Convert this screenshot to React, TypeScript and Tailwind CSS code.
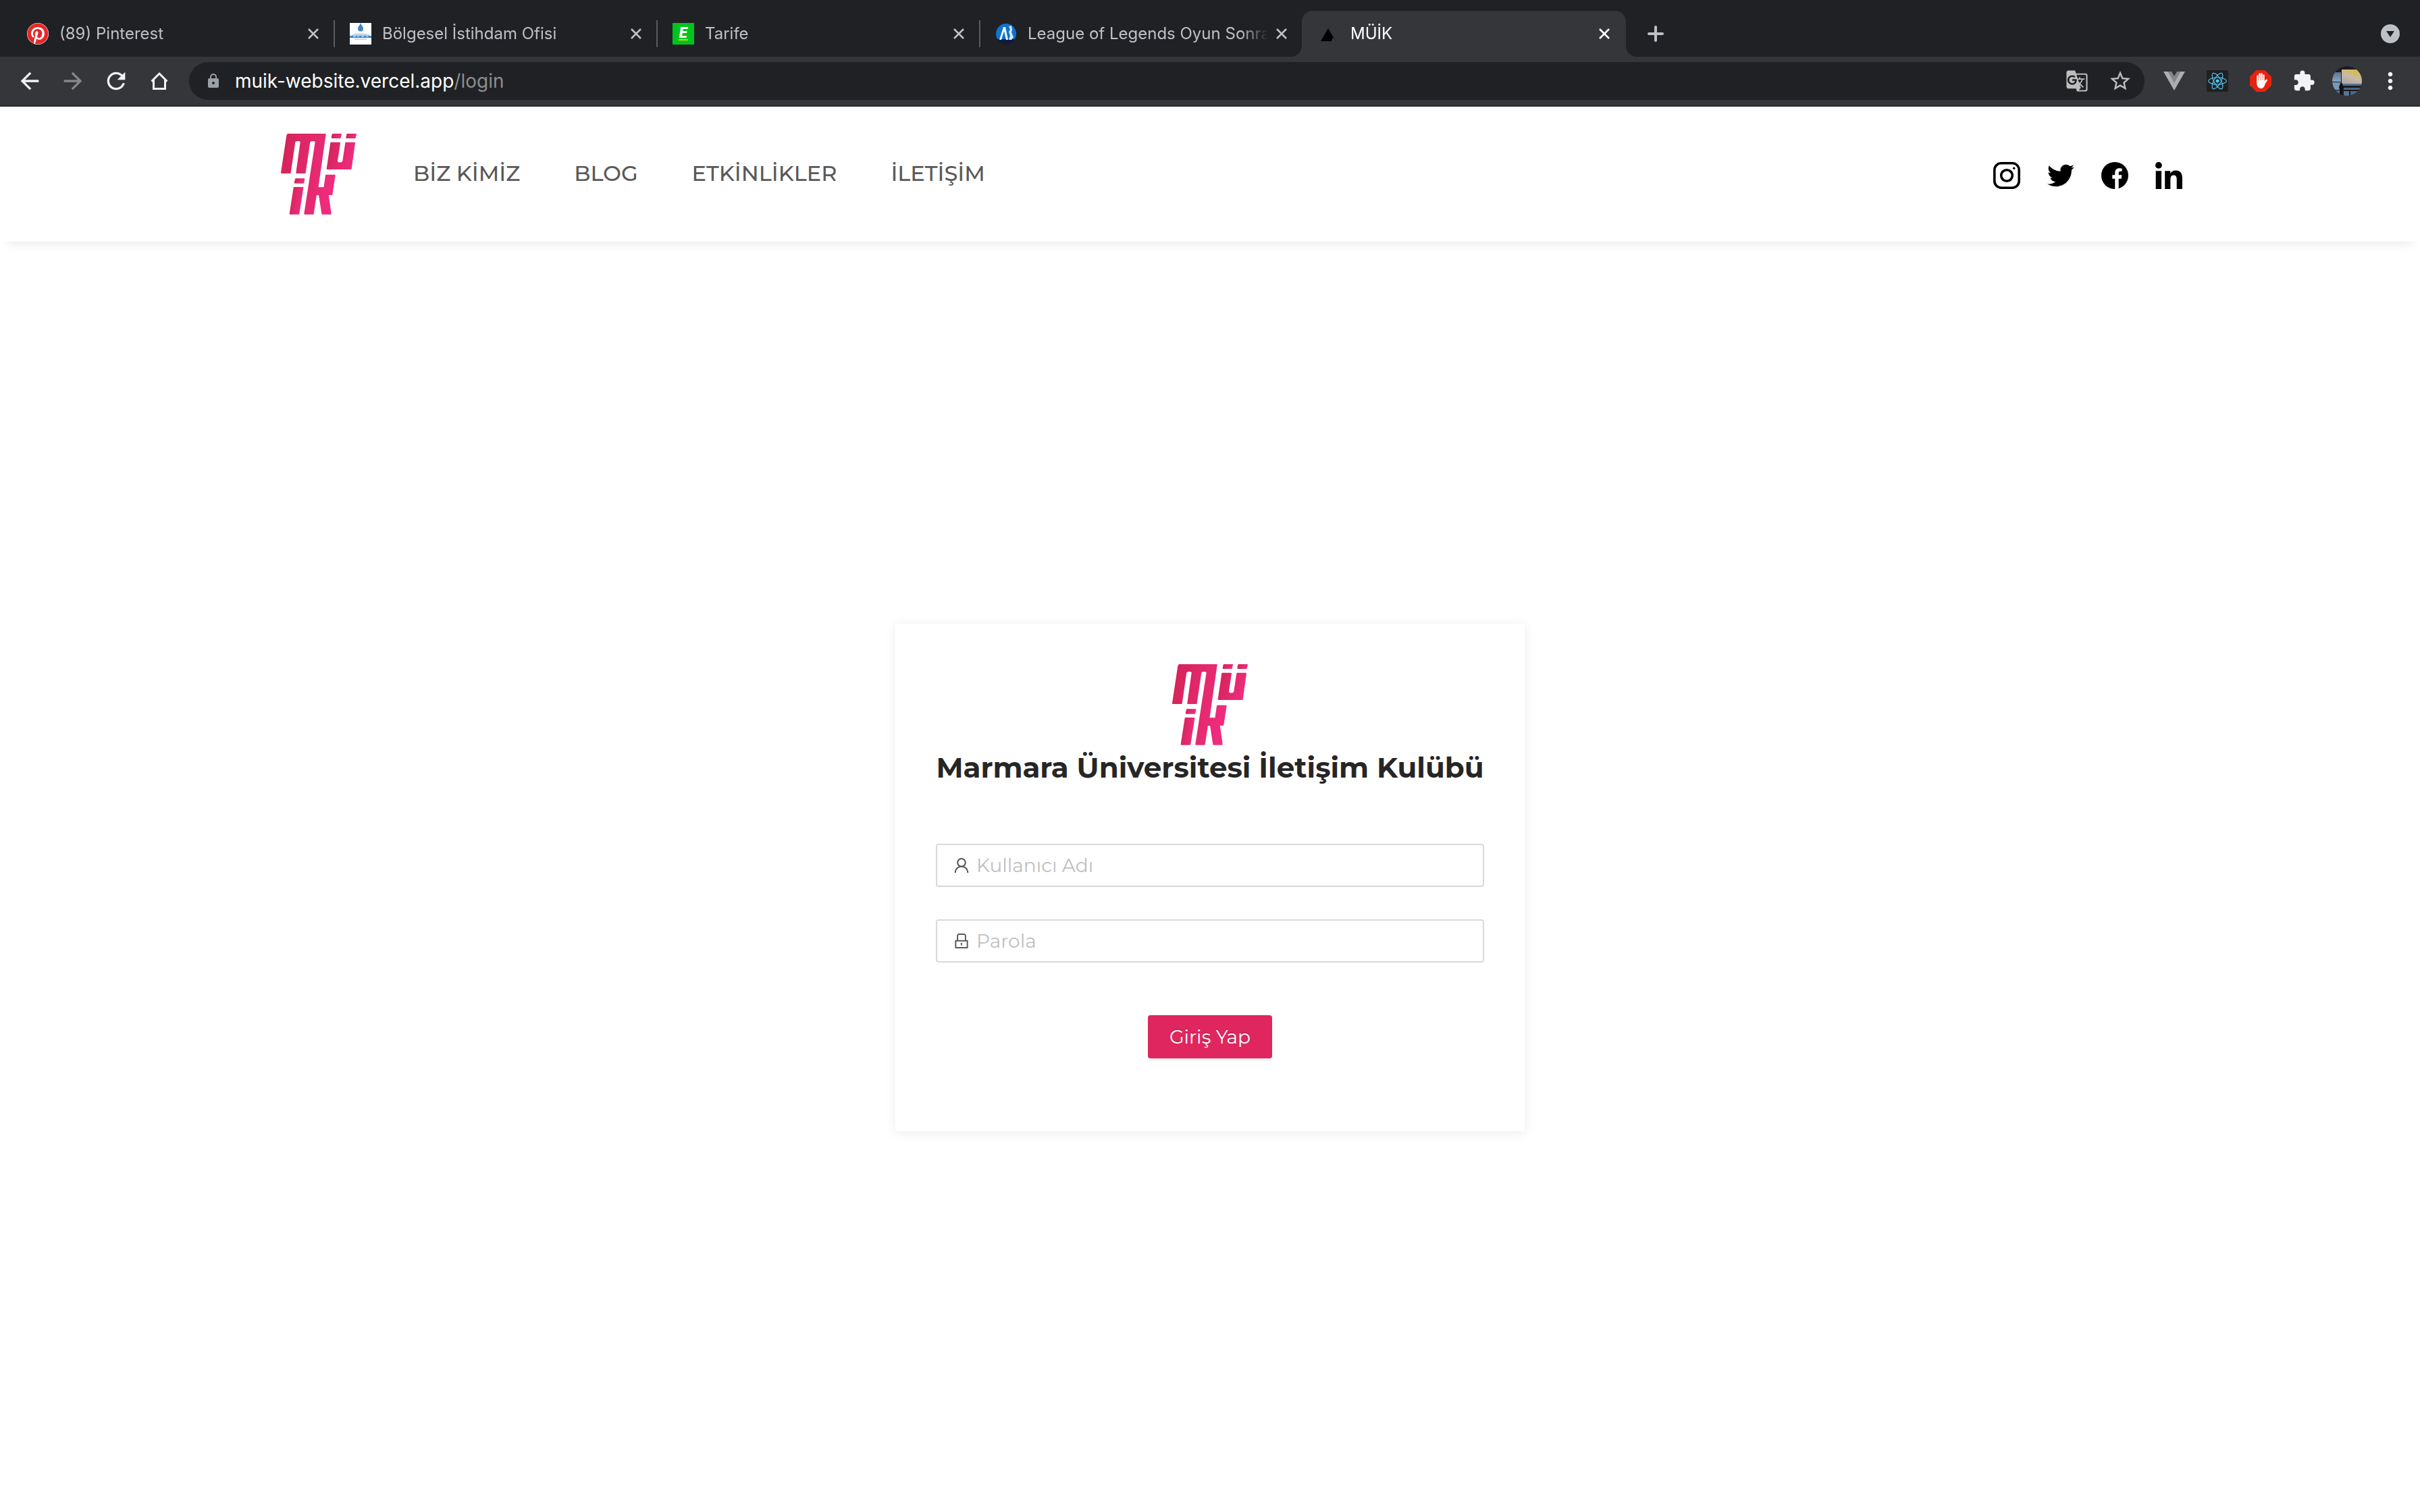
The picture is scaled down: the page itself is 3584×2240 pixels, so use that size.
import type { ReactNode } from "react";
import { AiOutlineLock, AiOutlineUser } from "react-icons/ai";
import { FaHandPaper, FaPinterest, FaReact, FaTwitter } from "react-icons/fa";
import {
  MdArrowBack,
  MdArrowForward,
  MdExtension,
  MdGTranslate,
  MdLock,
  MdMoreVert,
  MdRefresh,
  MdStarBorder,
} from "react-icons/md";

/* ---------- Favicons ---------- */

function PinterestIcon() {
  return (
    <span className="flex size-8 items-center justify-center rounded-full bg-white">
      <FaPinterest className="size-8 text-[#e62829]" />
    </span>
  );
}

function OfficeIcon() {
  return (
    <svg viewBox="0 0 32 32" className="size-8">
      <rect width="32" height="32" fill="#fff" />
      <path d="M16 0c1 4 4 5 4 8.500a4 4 0 0 1-8 0C12 5 15 4 16 0z" fill="#3f84bf" />
      <path d="M7 15h18v2H7z" fill="#d3e3f1" />
      <path d="M3 17h26v2H3z" fill="#b3cfe8" />
      <path d="M0 19h32v3H0z" fill="#3f86c6" />
      <path d="M5 19h4v2H5zM11 19h3v2h-3zM17 19h4v2h-4zM24 19h3v2h-3z" fill="#9fc2e2" />
      <path d="M7 23h18v2H7z" fill="#c5daee" />
    </svg>
  );
}

function TarifeIcon() {
  return (
    <svg viewBox="0 0 32 32" className="size-8">
      <rect width="32" height="32" fill="#00c31f" />
      <text
        x="16"
        y="22"
        textAnchor="middle"
        fill="#fff"
        className="font-[Inter,sans-serif] text-[21px] font-extrabold italic"
      >
        E
      </text>
      <rect x="9" y="24" width="14" height="2" fill="#d8d800" />
    </svg>
  );
}

function LeagueIcon() {
  return (
    <svg viewBox="0 0 32 32" className="size-8">
      <circle cx="16" cy="16" r="15" fill="#0d74cf" />
      <path d="M3 24h26a15 15 0 0 1-26 0z" fill="#141838" />
      <path d="M6 25l6-19h3l4 19h-3L13 12 9 25z" fill="#f4f7fb" />
      <path d="M20 5l4-1 1 6-1 4 3 7-3 4h-4l2-6-2-6 2-3z" fill="#dbe6f3" />
    </svg>
  );
}

function VercelIcon() {
  return (
    <svg viewBox="0 0 32 32" className="size-8">
      <path d="M15 8l11 19H4z" fill="#000" />
      <path d="M22 21l4 6h-6z" fill="#3a3b3e" />
    </svg>
  );
}

/* ---------- Browser chrome ---------- */

type TabData = { title: string; icon: ReactNode; active?: boolean; divider?: boolean };

const tabs: TabData[] = [
  { title: "(89) Pinterest", icon: <PinterestIcon /> },
  { title: "Bölgesel İstihdam Ofisi", icon: <OfficeIcon />, divider: true },
  { title: "Tarife", icon: <TarifeIcon />, divider: true },
  { title: "League of Legends Oyun Sonra", icon: <LeagueIcon />, divider: true },
  { title: "MÜİK", icon: <VercelIcon />, active: true },
];

function CloseGlyph() {
  return (
    <svg viewBox="0 0 16 16" className="size-4" fill="none" stroke="currentColor" strokeWidth="2.6">
      <path d="M1 1l14 14M15 1L1 15" />
    </svg>
  );
}

function Tab({ title, icon, active, divider }: TabData) {
  return (
    <div
      className={
        active
          ? "flex h-17 w-[480px] min-w-0 items-center rounded-t-2xl bg-[#35363a] pr-6 text-white"
          : "flex h-17 w-[478px] min-w-0 items-center pr-[22px] text-[#bdc1c6]"
      }
    >
      <span className={divider ? "h-10 w-0.5 bg-[#5a5b5f]" : "h-10 w-0.5"} />
      <button type="button" className="flex min-w-0 flex-1 items-center gap-4 pl-[22px] text-left">
        <span className="shrink-0">{icon}</span>
        <span className="flex-1 overflow-hidden text-2xl whitespace-nowrap [mask-image:linear-gradient(to_right,black_calc(100%-40px),transparent)]">
          {title}
        </span>
      </button>
      <button type="button" aria-label={`${title} sekmesini kapat`} className="ml-3">
        <CloseGlyph />
      </button>
    </div>
  );
}

function TabStrip() {
  return (
    <div className="flex h-21 items-end bg-[#202124] pr-[30px] pl-4">
      {tabs.map((t) =>
        t.active ? (
          <div key={t.title} className="-mx-4 flex items-end">
            <svg viewBox="0 0 16 16" className="size-4" fill="#35363a">
              <path d="M16 0v16H0A16 16 0 0 0 16 0z" />
            </svg>
            <Tab {...t} />
            <svg viewBox="0 0 16 16" className="size-4" fill="#35363a">
              <path d="M0 0v16h16A16 16 0 0 1 0 0z" />
            </svg>
          </div>
        ) : (
          <Tab key={t.title} {...t} />
        ),
      )}
      <button type="button" aria-label="Yeni sekme" className="ml-8 flex h-17 items-center text-[#bdc1c6]">
        <svg viewBox="0 0 24 24" className="size-6" fill="none" stroke="currentColor" strokeWidth="4" strokeLinecap="round">
          <path d="M12 2v20M2 12h20" />
        </svg>
      </button>
      <button type="button" aria-label="Sekmelerde ara" className="ml-auto flex h-17 items-center">
        <svg viewBox="0 0 28 28" className="size-7">
          <circle cx="14" cy="14" r="14" fill="#bdc1c6" />
          <path d="M8 10h12l-6 9z" fill="#202124" />
        </svg>
      </button>
    </div>
  );
}

function ToolButton({ label, children }: { label: string; children: ReactNode }) {
  return (
    <button type="button" aria-label={label} className="flex h-14 w-16 shrink-0 items-center justify-center">
      {children}
    </button>
  );
}

function Toolbar() {
  return (
    <div className="flex items-center border-b-2 border-[#28292c] bg-[#35363a] px-3 py-2 text-[#f1f3f4]">
      <ToolButton label="Geri">
        <MdArrowBack className="size-10" />
      </ToolButton>
      <ToolButton label="İleri">
        <MdArrowForward className="size-10 text-[#86878a]" />
      </ToolButton>
      <ToolButton label="Yenile">
        <MdRefresh className="size-10" />
      </ToolButton>
      <ToolButton label="Ana sayfa">
        <svg viewBox="0 0 28 28" className="size-7" fill="none" stroke="currentColor" strokeWidth="3">
          <path d="M2.500 14.500L14 3l11.500 11.500M5.500 12v13.500h17V12" />
        </svg>
      </ToolButton>
      <div className="mx-3 flex h-14 flex-1 items-center rounded-full bg-[#202124] pr-1 pl-6">
        <MdLock className="size-6 text-[#9aa0a6]" />
        <div className="ml-5 flex flex-1 items-center text-[28px] leading-9">
          <input
            aria-label="Adres çubuğu"
            defaultValue="muik-website.vercel.app"
            className="field-sizing-content bg-transparent text-white outline-none"
          />
          <span className="text-[#8c8d90]">/login</span>
        </div>
        <ToolButton label="Bu sayfayı çevir">
          <MdGTranslate className="size-[34px] text-[#bdbdbd]" />
        </ToolButton>
        <ToolButton label="Yer işareti ekle">
          <MdStarBorder className="size-9 text-[#bdbdbd]" />
        </ToolButton>
      </div>
      <ToolButton label="Vue.js devtools">
        <svg viewBox="0 0 32 32" className="size-8">
          <path d="M0 2h32L16 30z" fill="#aeaeae" />
          <path d="M6.500 2h19L16 19z" fill="#85868a" />
          <path d="M12 2h8l-4 7z" fill="#35363a" />
        </svg>
      </ToolButton>
      <ToolButton label="React Developer Tools">
        <span className="flex size-8 items-center justify-center rounded-xs bg-[#202020]">
          <FaReact className="size-7 text-[#55c5ee]" />
        </span>
      </ToolButton>
      <ToolButton label="AdBlock">
        <span className="flex size-8 items-center justify-center bg-[#e6230f] [clip-path:polygon(30%_0,70%_0,100%_30%,100%_70%,70%_100%,30%_100%,0_70%,0_30%)]">
          <svg viewBox="0 0 32 32" className="size-8" fill="none" stroke="#fff" strokeLinecap="round">
            <path d="M11.500 17V8.500M14.500 15V5.500M17.500 15V5.500M20.500 17V7.500" strokeWidth="2.400" />
            <path d="M21 20l3.500-5" strokeWidth="2.800" />
            <path d="M10.300 15h11.400v4.500l1 1C21 25 19.500 27 16.500 27s-6.200-2.500-6.200-7z" fill="#fff" stroke="none" />
          </svg>
        </span>
      </ToolButton>
      <ToolButton label="Uzantılar">
        <MdExtension className="size-[34px]" />
      </ToolButton>
      <ToolButton label="Profil">
        <svg viewBox="0 0 44 44" className="size-11">
          <defs>
            <clipPath id="avatar">
              <circle cx="22" cy="22" r="22" />
            </clipPath>
            <linearGradient id="sunset" x1="0.2" y1="1" x2="0.7" y2="0">
              <stop offset="0" stopColor="#a9a6ac" />
              <stop offset="0.5" stopColor="#c9b9a4" />
              <stop offset="1" stopColor="#d9bb45" />
            </linearGradient>
            <linearGradient id="glass" x1="0" y1="0" x2="0" y2="1">
              <stop offset="0" stopColor="#5d7389" />
              <stop offset="1" stopColor="#86a6c2" />
            </linearGradient>
          </defs>
          <g clipPath="url(#avatar)">
            <rect width="44" height="44" fill="#1b1d22" />
            <rect x="0" y="9" width="13" height="14" fill="url(#glass)" />
            <rect x="0" y="24" width="13" height="11" fill="#7898b5" />
            <rect x="1" y="36" width="10" height="8" fill="#54708a" />
            <rect x="14" y="5" width="30" height="22" fill="url(#sunset)" />
            <rect x="16" y="26" width="28" height="3" fill="#56718a" />
            <rect x="17" y="32" width="27" height="3" fill="#4b657d" />
            <rect x="17" y="37" width="8" height="7" fill="#58748e" />
            <rect x="27" y="37" width="14" height="7" fill="#4d667d" />
            <path d="M12 25h3v3l2 4-2 3v9h-4v-9l-1-4z" fill="#101216" />
          </g>
        </svg>
      </ToolButton>
      <ToolButton label="Menü">
        <MdMoreVert className="size-10" />
      </ToolButton>
    </div>
  );
}

/* ---------- Site ---------- */

const logoShapes = [
  "M79 57H245L211 295H241L249 239H287L274 324H257L269 410H232L219 325H204L191 410H154L203 92C204 81 177 81 175 92L155 228H118L137 92C138 81 111 81 109 92L89 228H51L76 62Z",
  "M278 57H315L311 72H275Z",
  "M343 57H381L377 72H340Z",
  "M271 95H309L297 175C296 188 323 188 325 175L337 95H375L359 210H254Z",
  "M114 256H151L148 272H110Z",
  "M107 294H145L127 410H89Z",
];

function Logo() {
  return (
    <svg viewBox="48 54 336 360" className="h-30 w-28" role="img" aria-label="MÜİK">
      <defs>
        <linearGradient id="brand" x1="0" y1="0.2" x2="1" y2="0.5">
          <stop offset="0" stopColor="#d42459" />
          <stop offset="1" stopColor="#f02c7e" />
        </linearGradient>
      </defs>
      {logoShapes.map((d) => (
        <path key={d} d={d} fill="url(#brand)" stroke="url(#brand)" strokeWidth="6" strokeLinejoin="round" />
      ))}
    </svg>
  );
}

function InstagramIcon() {
  return (
    <svg viewBox="0 0 40 40" className="size-10" fill="none" stroke="currentColor" strokeWidth="3.600">
      <rect x="1.800" y="1.800" width="36.400" height="36.400" rx="10" />
      <circle cx="20" cy="20" r="8.300" />
      <circle cx="30.700" cy="9.300" r="1.800" fill="currentColor" stroke="none" />
    </svg>
  );
}

function FacebookIcon() {
  return (
    <svg viewBox="0 0 40 40" className="size-10">
      <circle cx="20" cy="20" r="20" fill="currentColor" />
      <path
        d="M20.300 40V24.700h-4v-5.500h4v-3.400c0-4.200 2.400-6.600 6.300-6.600 1.700 0 4 .3 4 .3v4.300h-2.300c-2 0-2.600 1.200-2.600 2.500v2.900h4.700l-.7 5.500h-4V40z"
        fill="#fff"
      />
    </svg>
  );
}

function LinkedInIcon() {
  return (
    <svg viewBox="0 0 40 40" className="size-10" fill="currentColor">
      <circle cx="4.900" cy="4.900" r="4.900" />
      <path d="M.7 13.300h8.400V40H.7zM14.200 13.300h8v3.700c1.400-2.500 4.200-4.400 8-4.400 8.200 0 9.800 5.300 9.800 12.400v15h-8.300V26.700c0-3.200-.1-7.200-4.400-7.200s-4.900 3.400-4.900 7V40h-8.200z" />
    </svg>
  );
}

const menu = ["BİZ KİMİZ", "BLOG", "ETKİNLİKLER", "İLETİŞİM"];

const socials = [
  { name: "Instagram", icon: <InstagramIcon /> },
  { name: "Twitter", icon: <FaTwitter className="size-10" /> },
  { name: "Facebook", icon: <FacebookIcon /> },
  { name: "LinkedIn", icon: <LinkedInIcon /> },
];

function Header() {
  return (
    <header className="bg-white shadow-[0_14px_14px_-12px_rgba(0,0,0,0.1)]">
      <div className="mx-auto flex h-50 max-w-[2880px] items-center pl-16">
        <a href="#home">
          <Logo />
        </a>
        <nav className="ml-21 pb-0.5">
          <ul className="flex gap-20 text-[32px] leading-10 font-medium text-[#595959]">
            {menu.map((m) => (
              <li key={m}>
                <a href="#menu">{m}</a>
              </li>
            ))}
          </ul>
        </nav>
        <ul className="ml-auto flex gap-10 pt-1 text-black">
          {socials.map((s) => (
            <li key={s.name}>
              <a href="#social" aria-label={s.name} className="flex size-10 items-center justify-center">
                {s.icon}
              </a>
            </li>
          ))}
        </ul>
      </div>
    </header>
  );
}

function Field({ label, type, icon }: { label: string; type: string; icon: ReactNode }) {
  return (
    <label className="flex h-16 items-center gap-2 rounded-sm border-2 border-[#d9d9d9] bg-white px-[22px]">
      {icon}
      <input
        type={type}
        aria-label={label}
        placeholder={label}
        className="min-w-0 flex-1 bg-transparent text-[28px] leading-11 outline-none placeholder:text-[#bfbfbf]"
      />
    </label>
  );
}

function LoginCard() {
  return (
    <section className="flex w-[932px] flex-col items-center bg-white p-15 shadow-[0_2px_16px_rgba(0,0,0,0.08)]">
      <Logo />
      <h1 className="text-[42px] leading-[66px] font-bold whitespace-nowrap text-[#262626]">
        Marmara Üniversitesi İletişim Kulübü
      </h1>
      <form className="mt-20 mb-12 flex w-full flex-col gap-12 text-[#595959]">
        <Field label="Kullanıcı Adı" type="text" icon={<AiOutlineUser className="size-7" />} />
        <Field label="Parola" type="password" icon={<AiOutlineLock className="size-7" />} />
        <button
          type="button"
          className="mt-[30px] h-16 self-center rounded-sm bg-[#df265e] px-8 text-[28px] leading-11 text-white shadow-[0_4px_0_rgba(0,0,0,0.045)] text-shadow-[0_-2px_0_rgba(0,0,0,0.12)]"
        >
          Giriş Yap
        </button>
      </form>
    </section>
  );
}

export default function App() {
  return (
    <div className="flex min-h-screen flex-col bg-white">
      <div className="font-[Inter,sans-serif]">
        <TabStrip />
        <Toolbar />
      </div>
      <div className="flex flex-1 flex-col font-[Montserrat,Inter,sans-serif]">
        <Header />
        <main className="flex flex-1 items-center justify-center pt-0.5">
          <LoginCard />
        </main>
      </div>
    </div>
  );
}
